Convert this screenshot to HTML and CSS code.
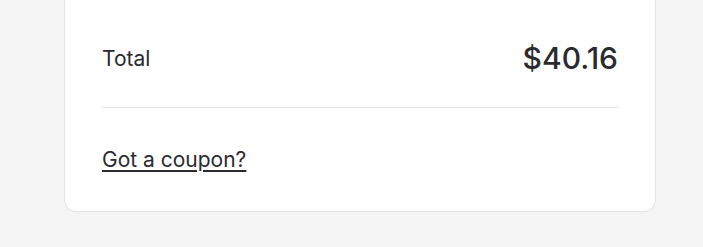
FILE: index.html
```html
<!DOCTYPE html>
<html>
<head>
<meta charset="utf-8">
<link rel="stylesheet" href="styles.css">
</head>
<body>
<div class="card">
  <div class="total-row">
    <span class="label">Total</span>
    <span class="amount">$40.16</span>
  </div>
  <div class="divider"></div>
  <a class="coupon" href="#">Got a coupon?</a>
</div>
</body>
</html>
```
FILE: styles.css
```css
html, body {
  margin: 0;
  padding: 0;
  background: #f5f5f5;
  font-family: Inter, "Noto Sans", sans-serif;
  color: #2a2a30;
}
.card {
  box-sizing: border-box;
  margin-left: 64px;
  width: 592px;
  background: #ffffff;
  border: 1px solid #e4e4e4;
  border-top: none;
  border-radius: 0 0 12px 12px;
  padding: 38px 36px 37px 37px;
  display: flex;
  flex-direction: column;
}
.total-row {
  display: flex;
  justify-content: space-between;
  align-items: center;
  height: 40px;
  margin-bottom: 29px;
}
.label {
  font-size: 21px;
  font-weight: 400;
}
.amount {
  font-size: 30px;
  font-weight: 500;
  margin-right: 1px;
}
.divider {
  height: 1px;
  background: #e5e5e5;
}
.coupon {
  display: block;
  margin-top: 0;
  line-height: 28px;
  padding-top: 38px;
  font-size: 21px;
  color: #2a2a30;
  text-decoration: underline;
  text-underline-offset: 3px;
  align-self: flex-start;
}
```
